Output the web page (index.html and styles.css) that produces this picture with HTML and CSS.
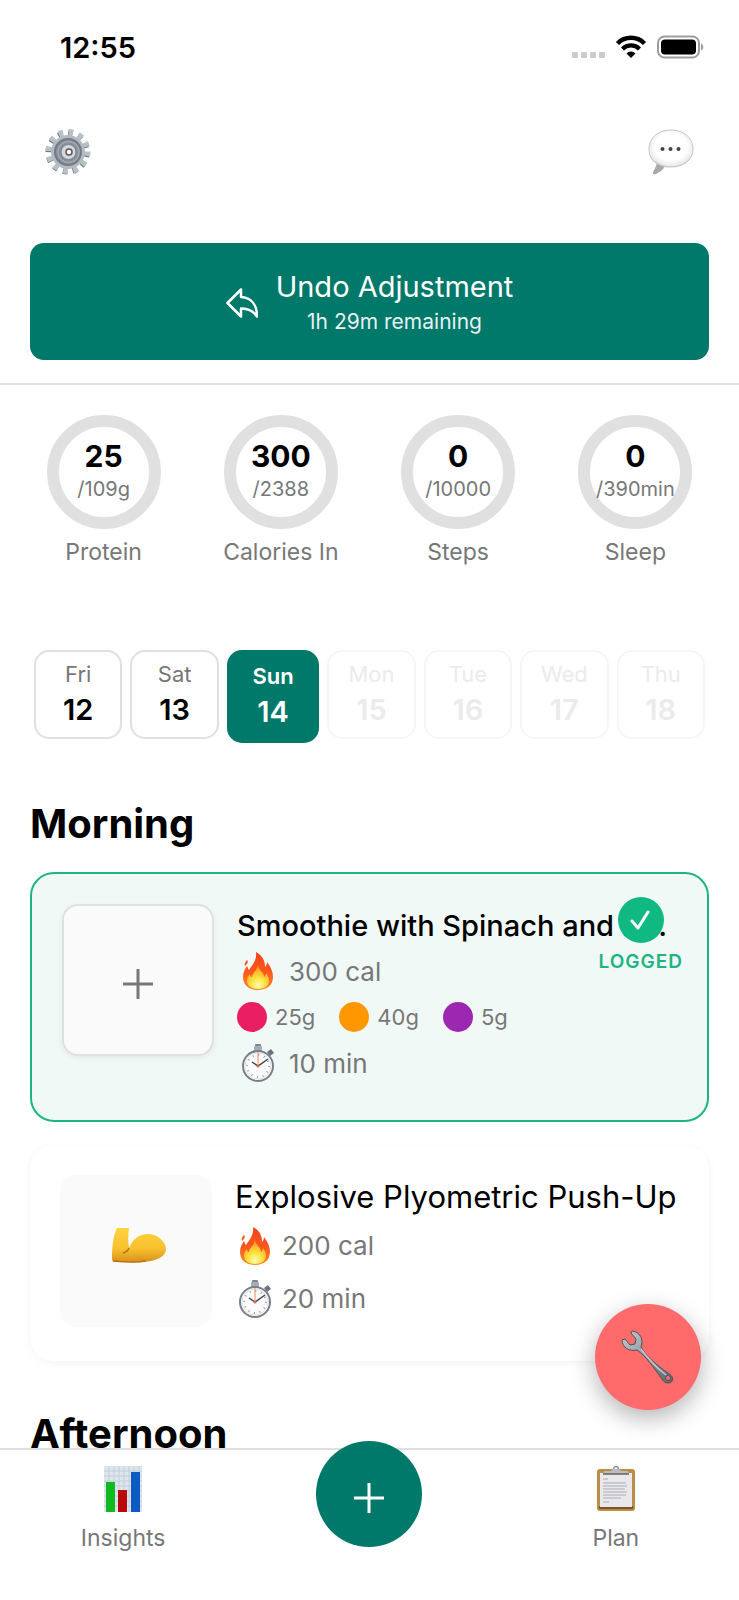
FILE: index.html
```html
<!DOCTYPE html>
<html lang="en">
<head>
  <meta charset="UTF-8">
  <meta name="viewport" content="width=device-width, initial-scale=1.0">
  <title>Daily Plan</title>
  <link rel="stylesheet" href="styles.css">
</head>
<body>
  <!-- shared icons -->
  <svg class="defs" width="0" height="0" aria-hidden="true">
    <defs>
      <linearGradient id="flame" x1="0" y1="0" x2="0" y2="1">
        <stop offset="0" stop-color="#f2431c"/>
        <stop offset="0.55" stop-color="#fb5a1f"/>
        <stop offset="1" stop-color="#fd8b2a"/>
      </linearGradient>
      <radialGradient id="flameCore" cx="0.5" cy="0.85" r="0.75">
        <stop offset="0" stop-color="#fffbb0"/>
        <stop offset="0.45" stop-color="#ffe23c"/>
        <stop offset="1" stop-color="#ff9a22"/>
      </radialGradient>
      <linearGradient id="steel" x1="0" y1="0" x2="1" y2="1">
        <stop offset="0" stop-color="#c4cbd3"/>
        <stop offset="0.5" stop-color="#8d959e"/>
        <stop offset="1" stop-color="#5d636a"/>
      </linearGradient>
      <symbol id="icon-fire" viewBox="0 0 32 38">
        <path d="M14 0c7 4 9 9 9 15 1-1 2-3 2-5 4 5 6 10 6 15 0 8-6 13-15 13S1 33 1 25c0-5 2-8 4-11 1 2 1 3 2 4 3-5 8-9 7-18z" fill="url(#flame)"/>
        <path d="M5 8c2 2 0 4-2 6-1-2 0-4 2-6z" fill="#fb5a1f"/>
        <path d="M16 13c1 6 6 7 6 12 1-1 2-2 2-4 2 3 3 5 3 8 0 5-5 8-11 8S5 34 5 29c0-3 1-5 3-7 0 2 1 3 2 3 0-4 5-6 6-12z" fill="url(#flameCore)"/>
      </symbol>
      <symbol id="icon-watch" viewBox="0 0 34 38">
        <rect x="14" y="0" width="6" height="3" rx="1" fill="#7d8691"/>
        <rect x="13" y="2" width="8" height="5" rx="1" fill="#a4acb5"/>
        <path d="M26 8l4-3 3 4-4 3z" fill="#6b737d"/>
        <circle cx="17" cy="22" r="15" fill="#fbfbfb" stroke="#77808a" stroke-width="2"/>
        <circle cx="17" cy="22" r="13" fill="none" stroke="#dfe3e6"/>
        <circle cx="17" cy="22" r="11" fill="none" stroke="#9a9fa5" stroke-width="2" stroke-dasharray="1 4.76"/>
        <path d="M17 8v14" stroke="#ee8a6c"/>
        <path d="M11 18l6 4 10-7" fill="none" stroke="#444" stroke-width="1.5"/>
        <circle cx="17" cy="22" r="1.5" fill="#d9694c"/>
      </symbol>
    </defs>
  </svg>

  <div class="app">
    <main class="content">
      <div class="status-bar">
        <span class="time">12:55</span>
        <div class="status-icons">
          <svg width="34" height="24" viewBox="0 0 34 24" fill="#cbcbcb">
            <rect x="1" y="17" width="6" height="6" rx="1"/>
            <rect x="10" y="17" width="6" height="6" rx="1"/>
            <rect x="19" y="17" width="6" height="6" rx="1"/>
            <rect x="28" y="17" width="6" height="6" rx="1"/>
          </svg>
          <svg width="32" height="24" viewBox="0 0 32 24" fill="none" stroke="#000">
            <path d="M2.5 8.500a19 19 0 0 1 27 0" stroke-width="4.500"/>
            <path d="M7.500 14a12 12 0 0 1 17 0" stroke-width="4.200"/>
            <path d="M11.500 18.500a6.300 6.300 0 0 1 9 0L16 23z" fill="#000" stroke="none"/>
          </svg>
          <svg width="47" height="24" viewBox="0 0 47 24">
            <rect x="1" y="1.500" width="41" height="21" rx="6.500" fill="none" stroke="#9d9d9d" stroke-width="2"/>
            <rect x="4" y="4.500" width="35" height="15" rx="4" fill="#000"/>
            <path d="M44 8.500c3 1 3 6 0 7z" fill="#9d9d9d"/>
          </svg>
        </div>
      </div>

      <header class="top-bar">
        <div class="top-actions">
          <button class="icon-button" aria-label="Settings">
            <svg width="46" height="46" viewBox="0 0 46 46">
              <circle cx="22.500" cy="23.500" r="19" fill="none" stroke="#6d747d" stroke-width="6" stroke-dasharray="4.500 5.448"/>
              <circle cx="23" cy="22.500" r="19" fill="none" stroke="#b9c0c8" stroke-width="7" stroke-dasharray="4.500 5.448"/>
              <circle cx="23" cy="23" r="17" fill="#b3bac2"/>
              <circle cx="23" cy="23" r="13" fill="#858e98" stroke="#737c86" stroke-width="2"/>
              <circle cx="23.500" cy="23" r="10.500" fill="none" stroke="#a0a8b1" stroke-width="1.500"/>
              <circle cx="23.500" cy="23" r="7.500" fill="#d3d8dd" stroke="#7c848e"/>
              <circle cx="24" cy="23" r="3" fill="#fff" stroke="#63554f" stroke-width="1.500"/>
            </svg>
          </button>
          <button class="icon-button" aria-label="Messages">
            <svg width="46" height="46" viewBox="0 0 46 46">
              <defs>
                <radialGradient id="bubble" cx="0.5" cy="0.45" r="0.6">
                  <stop offset="0.6" stop-color="#fff"/>
                  <stop offset="0.85" stop-color="#ececec"/>
                  <stop offset="1" stop-color="#b0b0b0"/>
                </radialGradient>
              </defs>
              <path d="M9 34c-1 4-3 7-4 9-1 2 1 3 3 2 4-2 7-4 9-8z" fill="#a9a9a9"/>
              <path d="M23 1c13 0 22 8 22 19s-9 18-22 18c-3 0-6 0-8-1-9-2-14-8-14-17C1 9 10 1 23 1z" fill="url(#bubble)" stroke="#c6c6c6"/>
              <circle cx="14.500" cy="20" r="2" fill="#444"/>
              <circle cx="22.500" cy="20" r="2" fill="#444"/>
              <circle cx="30.500" cy="20" r="2" fill="#444"/>
            </svg>
          </button>
        </div>

        <button class="undo-button">
          <svg width="32" height="32" viewBox="0 0 32 32" fill="none" stroke="#fff" stroke-width="2.500" stroke-linejoin="round">
            <path d="M15 1.500L1.500 15 15 28.500v-8c7 0 12 2 16 8 0-12-6-19-16-19.500z"/>
          </svg>
          <span class="undo-text">
            <span class="undo-title">Undo Adjustment</span>
            <span class="undo-time">1h 29m remaining</span>
          </span>
        </button>
      </header>

      <section class="stats">
        <div class="stat">
          <div class="ring"><strong>25</strong><span>/109g</span></div>
          <div class="stat-label">Protein</div>
        </div>
        <div class="stat">
          <div class="ring"><strong>300</strong><span>/2388</span></div>
          <div class="stat-label">Calories In</div>
        </div>
        <div class="stat">
          <div class="ring"><strong>0</strong><span>/10000</span></div>
          <div class="stat-label">Steps</div>
        </div>
        <div class="stat">
          <div class="ring"><strong>0</strong><span>/390min</span></div>
          <div class="stat-label">Sleep</div>
        </div>
      </section>

      <nav class="days">
        <button class="day"><span>Fri</span><b>12</b></button>
        <button class="day"><span>Sat</span><b>13</b></button>
        <button class="day selected"><span>Sun</span><b>14</b></button>
        <button class="day" disabled><span>Mon</span><b>15</b></button>
        <button class="day" disabled><span>Tue</span><b>16</b></button>
        <button class="day" disabled><span>Wed</span><b>17</b></button>
        <button class="day" disabled><span>Thu</span><b>18</b></button>
      </nav>

      <section class="period">
        <h2>Morning</h2>

        <article class="card logged">
          <button class="thumb add-photo" aria-label="Add photo">
            <svg width="30" height="30" viewBox="0 0 30 30" stroke="#777" stroke-width="3">
              <path d="M15 0v30M0 15h30"/>
            </svg>
          </button>
          <div class="info">
            <h3>Smoothie with Spinach and B...</h3>
            <div class="meta"><svg class="emoji"><use href="#icon-fire"/></svg>300 cal</div>
            <div class="macros">
              <span class="macro"><i class="dot protein"></i>25g</span>
              <span class="macro"><i class="dot carbs"></i>40g</span>
              <span class="macro"><i class="dot fat"></i>5g</span>
            </div>
            <div class="meta"><svg class="emoji"><use href="#icon-watch"/></svg>10 min</div>
          </div>
          <div class="badge">
            <span class="check">
              <svg width="21" height="21" viewBox="0 0 21 21" fill="none" stroke="#fff" stroke-width="3" stroke-linecap="round" stroke-linejoin="round">
                <path d="M2 11l6 7L18 2"/>
              </svg>
            </span>
            <span class="badge-text">LOGGED</span>
          </div>
        </article>

        <article class="card workout">
          <div class="thumb">
            <svg width="56" height="36" viewBox="0 0 56 36">
              <defs>
                <linearGradient id="arm" x1="0" y1="0" x2="0" y2="1">
                  <stop offset="0" stop-color="#ffd23f"/>
                  <stop offset="0.6" stop-color="#f8c02f"/>
                  <stop offset="1" stop-color="#d98f1c"/>
                </linearGradient>
              </defs>
              <path d="M6 1h12c-1 7-1 14 0 20 4-9 10-14 19-14 10 0 18 8 18 15 0 8-10 12-23 13-9 1-18 0-26 0-4 0-5-1-5-4C1 20 2 9 6 1z" fill="url(#arm)"/>
              <path d="M18 21c-1 3-3 4-6 5M2 34c10 1 22 2 33 0" fill="none" stroke="#b87514" stroke-width="1.500"/>
            </svg>
          </div>
          <div class="info">
            <h3>Explosive Plyometric Push-Up</h3>
            <div class="meta"><svg class="emoji"><use href="#icon-fire"/></svg>200 cal</div>
            <div class="meta"><svg class="emoji"><use href="#icon-watch"/></svg>20 min</div>
          </div>
        </article>
      </section>

      <section class="period">
        <h2>Afternoon</h2>
      </section>
    </main>

    <nav class="tab-bar">
      <a class="tab" href="#insights">
        <svg width="40" height="46" viewBox="0 0 40 46">
          <rect x="1" y="0" width="38" height="46" fill="#dde6ee"/>
          <path d="M1 5h38M1 10h38M1 15h38M1 20h38M1 25h38M1 30h38M1 35h38M1 40h38M6 0v46M11 0v46M16 0v46M21 0v46M26 0v46M31 0v46M36 0v46" stroke="#c3ced8"/>
          <rect x="3" y="16" width="9" height="30" fill="#0fba1e"/>
          <rect x="15" y="24" width="9" height="22" fill="#b80808"/>
          <rect x="28" y="6" width="9" height="40" fill="#0c5ac4"/>
        </svg>
        <span>Insights</span>
      </a>
      <div class="tab">
        <button class="add-button" aria-label="Add">
          <svg width="30" height="30" viewBox="0 0 30 30" stroke="#fff" stroke-width="3">
            <path d="M15 0v30M0 15h30"/>
          </svg>
        </button>
      </div>
      <a class="tab" href="#plan">
        <svg width="40" height="46" viewBox="0 0 40 46">
          <rect x="1" y="3" width="38" height="42" rx="3" fill="#bb8d49"/>
          <path d="M3 40h34v3H3z" fill="#7b5528"/>
          <rect x="4" y="7" width="32" height="34" fill="#e9e9ec"/>
          <path d="M7 13h5M7 17h23M7 20h24M7 23h22M7 26h24M7 29h23M7 32h18M7 36h6" stroke="#bfc1c6" stroke-width="1.500"/>
          <circle cx="20" cy="3" r="2.500" fill="none" stroke="#8a97a3" stroke-width="1.500"/>
          <path d="M7 8q0-3 3-3h5l2-2h6l2 2h5q3 0 3 3z" fill="#b9bdc2"/>
          <path d="M7 8h26" stroke="#6b5f50" stroke-width="1.500"/>
        </svg>
        <span>Plan</span>
      </a>
    </nav>

    <button class="fab" aria-label="Adjust plan">
      <svg width="54" height="54" viewBox="0 0 54 54">
        <path d="M11 1c8 1 12 8 9 16 5 9 14 17 27 26 5 3 6 7 3 9s-7 1-9-3C33 38 25 26 16 20 8 22 1 17 1 10l3-1 5 6 5-1 1-5-5-6z" fill="url(#steel)" stroke="#4d5258"/>
        <path d="M20 19c8 11 16 19 25 26" fill="none" stroke="#c1c6cc" stroke-width="1.500"/>
        <circle cx="47" cy="48" r="2.500" fill="#ff6b6b" stroke="#4d5258"/>
      </svg>
    </button>
  </div>
</body>
</html>
```
FILE: styles.css
```css
* {
  box-sizing: border-box;
}

body {
  margin: 0;
  font-family: Inter, "Liberation Sans", sans-serif;
  background: #fff;
  color: #000;
}

button {
  font: inherit;
  border: none;
  padding: 0;
  background: none;
  cursor: pointer;
}

svg {
  display: block;
  flex-shrink: 0;
}

.defs {
  position: absolute;
}

/* app shell: content scrolls, tab bar stays at the bottom */
.app {
  display: flex;
  flex-direction: column;
  height: 100vh;
}

.content {
  flex: 1;
  min-height: 0;
  overflow-x: hidden;
  overflow-y: auto;
  scrollbar-width: none;
}

/* status bar */
.status-bar {
  display: flex;
  justify-content: space-between;
  align-items: center;
  height: 94px;
  padding: 0 35px 0 60px;
}

.time {
  font-size: 29px;
  font-weight: 600;
}

.status-icons {
  display: flex;
  gap: 10px;
}

/* header */
.top-bar {
  padding: 0 30px 23px;
  border-bottom: 2px solid #e0e0e0;
}

.top-actions {
  display: flex;
  justify-content: space-between;
  align-items: center;
  height: 116px;
  padding: 0 15px;
  margin-bottom: 33px;
}

.undo-button {
  display: flex;
  justify-content: center;
  align-items: center;
  gap: 18px;
  width: 100%;
  padding: 26px 0 21px;
  border-radius: 14px;
  background: #00796b;
  color: #fff;
}

.undo-text {
  display: flex;
  flex-direction: column;
  align-items: center;
}

.undo-title {
  font-size: 29px;
  line-height: 36px;
}

.undo-time {
  font-size: 21px;
  line-height: 34px;
  opacity: 0.9;
}

/* progress rings */
.stats {
  display: grid;
  grid-template-columns: repeat(4, 1fr);
  padding: 30px 15px 84px;
}

.stat {
  display: flex;
  flex-direction: column;
  align-items: center;
}

.ring {
  display: flex;
  flex-direction: column;
  justify-content: center;
  align-items: center;
  width: 114px;
  height: 114px;
  border: 12px solid #e0e0e0;
  border-radius: 50%;
  white-space: nowrap;
}

.ring strong {
  font-size: 30px;
  line-height: 34px;
}

.ring span {
  font-size: 20px;
  line-height: 32px;
  color: #777;
}

.stat-label {
  margin-top: 9px;
  font-size: 23px;
  line-height: 28px;
  color: #777;
}

/* day picker */
.days {
  display: flex;
  align-items: flex-start;
  gap: 8px;
  height: 93px;
  padding: 0 34px;
}

.day {
  box-sizing: content-box;
  flex: 1 1 0;
  display: flex;
  flex-direction: column;
  align-items: center;
  gap: 4px;
  padding: 8px 0 9px;
  border: 2px solid #e0e0e0;
  border-radius: 15px;
  color: #000;
}

.day span {
  font-size: 22px;
  line-height: 28px;
  color: #777;
}

.day b {
  font-size: 29px;
  line-height: 36px;
  font-weight: 600;
}

.day.selected {
  padding: 10px 2px 11px;
  border-color: #00796b;
  background: #00796b;
  color: #fff;
}

.day.selected span {
  color: #fff;
  font-weight: 600;
}

.day:disabled {
  border-color: #f6f6f6;
}

.day:disabled span,
.day:disabled b {
  color: #ebebeb;
}

/* meals and workouts */
.period {
  padding: 57px 30px 0;
}

.period + .period {
  padding-top: 49px;
}

h2 {
  margin: 0 0 24px;
  font-size: 40px;
  line-height: 48px;
  font-weight: 700;
}

.card {
  position: relative;
  display: flex;
  gap: 23px;
  padding: 30px 30px 34px;
  border-radius: 24px;
  background: #fff;
  box-shadow: 0 2px 8px rgba(0, 0, 0, 0.05);
}

.card + .card {
  margin-top: 23px;
}

.card.logged {
  border: 2px solid #1db584;
  background: #f0f9f6;
  box-shadow: none;
}

.thumb {
  display: flex;
  justify-content: center;
  align-items: center;
  flex-shrink: 0;
  width: 152px;
  height: 152px;
  border-radius: 16px;
  background: #fafafa;
}

.add-photo {
  padding-top: 8px;
  border: 2px solid #e0e0e0;
  box-shadow: 0 2px 6px rgba(0, 0, 0, 0.06);
}

.workout .thumb {
  padding: 0 0 12px 6px;
}

.info {
  flex: 1;
  min-width: 0;
}

h3 {
  margin: 0;
  font-size: 29px;
  line-height: 44px;
  font-weight: 500;
  white-space: nowrap;
}

.workout h3 {
  font-size: 31px;
  font-weight: 400;
}

.meta {
  display: flex;
  align-items: center;
  gap: 14px;
  height: 46px;
  padding-left: 4px;
  font-size: 26px;
  color: #777;
}

.workout .meta {
  gap: 10px;
  height: 53px;
  padding-left: 3px;
}

.emoji {
  width: 34px;
  height: 38px;
}

.macros {
  display: flex;
  align-items: center;
  gap: 24px;
  height: 46px;
  font-size: 22px;
  color: #777;
}

.macro {
  display: flex;
  align-items: center;
  gap: 8px;
}

.dot {
  width: 30px;
  height: 30px;
  border-radius: 50%;
}

.dot.protein {
  background: #e91e63;
}

.dot.carbs {
  background: #ff9800;
}

.dot.fat {
  background: #9c27b0;
}

/* logged badge, lies over the card's corner */
.badge {
  position: absolute;
  top: 23px;
  right: 24px;
  display: flex;
  flex-direction: column;
  align-items: center;
  gap: 6px;
}

.check {
  display: flex;
  justify-content: center;
  align-items: center;
  width: 46px;
  height: 46px;
  border-radius: 50%;
  background: #10b981;
}

.badge-text {
  font-size: 19px;
  line-height: 26px;
  font-weight: 600;
  letter-spacing: 1px;
  color: #1db584;
}

/* bottom tab bar */
.tab-bar {
  display: grid;
  grid-template-columns: repeat(3, 1fr);
  height: 152px;
  padding-top: 16px;
  border-top: 2px solid #e0e0e0;
  background: #fff;
}

.tab {
  display: flex;
  flex-direction: column;
  align-items: center;
  gap: 12px;
  font-size: 23px;
  line-height: 28px;
  color: #777;
  text-decoration: none;
}

.add-button {
  display: flex;
  justify-content: center;
  align-items: center;
  width: 106px;
  height: 106px;
  margin-top: -25px;
  padding-top: 8px;
  border-radius: 50%;
  background: #00796b;
}

.fab {
  position: fixed;
  right: 38px;
  bottom: 190px;
  display: flex;
  justify-content: center;
  align-items: center;
  width: 106px;
  height: 106px;
  border-radius: 50%;
  background: #ff6b6b;
  box-shadow: 0 8px 24px rgba(0, 0, 0, 0.3);
}
```
